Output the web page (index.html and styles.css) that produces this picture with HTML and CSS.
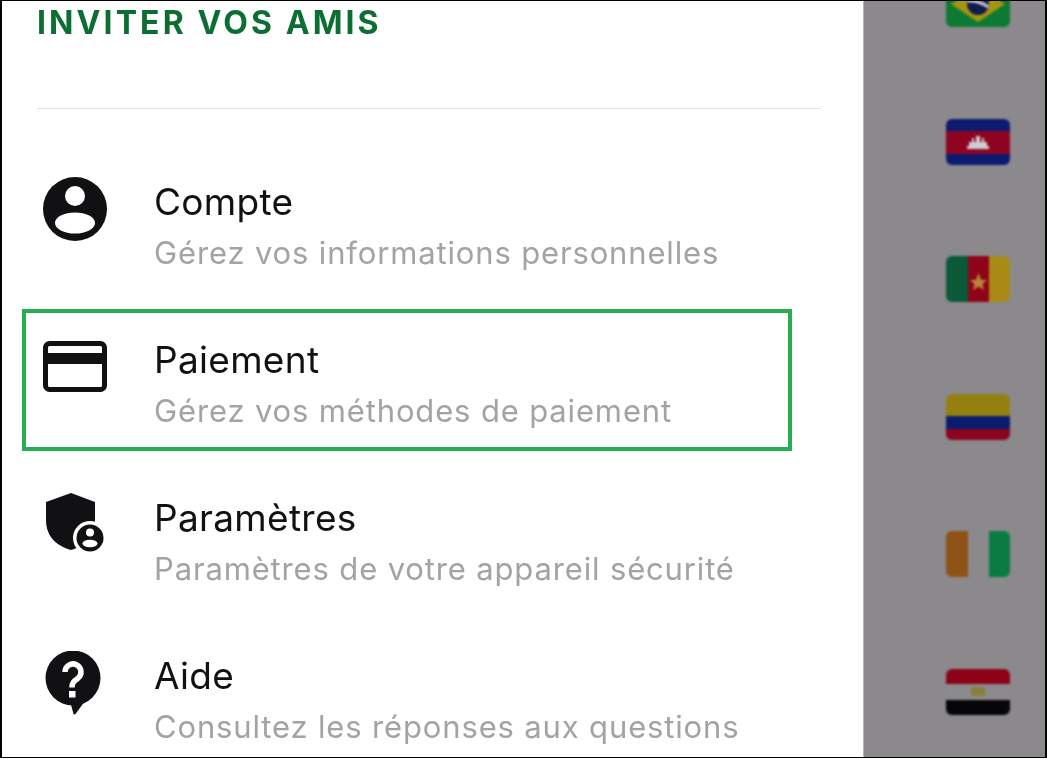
FILE: index.html
```html
<!DOCTYPE html>
<html lang="fr">
<head>
<meta charset="utf-8">
<title>Menu</title>
<link rel="stylesheet" href="styles.css">
</head>
<body>
<div class="frame">
  <main class="panel">
    <div class="invite">INVITER VOS AMIS</div>
    <hr class="divider">
    <div class="menu">
      <div class="row">
        <svg class="icon" viewBox="0 0 64 64"><circle cx="32" cy="32" r="32" fill="#111013"/><circle cx="32" cy="19" r="10" fill="#fff"/><ellipse cx="32" cy="46" rx="20" ry="10.5" fill="#fff"/></svg>
        <div class="text"><div class="name">Compte</div><div class="desc">Gérez vos informations personnelles</div></div>
      </div>
      <div class="row">
        <svg class="icon" viewBox="0 0 64 64"><rect x="2.5" y="8.5" width="59" height="46" rx="4" fill="none" stroke="#111013" stroke-width="5"/><rect x="2" y="18" width="60" height="11" fill="#111013"/></svg>
        <div class="text"><div class="name">Paiement</div><div class="desc">Gérez vos méthodes de paiement</div></div>
      </div>
      <div class="row">
        <svg class="icon" viewBox="0 0 64 64"><path d="M28 0 L52 9 V30 C52 44 42 53 28 57 C14 53 3 44 3 27 V9 Z" fill="#111013"/><circle cx="47" cy="45" r="17" fill="#fff"/><circle cx="47" cy="45" r="13.500" fill="#111013"/><circle cx="47" cy="39.5" r="4" fill="#fff"/><ellipse cx="47" cy="50.5" rx="7.5" ry="3.8" fill="#fff"/></svg>
        <div class="text"><div class="name">Paramètres</div><div class="desc">Paramètres de votre appareil sécurité</div></div>
      </div>
      <div class="row">
        <svg class="icon" viewBox="0 0 64 64"><circle cx="30" cy="27" r="27.5" fill="#111013"/><path d="M27 50 L42 50 L32.5 63 C31 64 30 63 30 61 Z" fill="#111013"/><path d="M22 21 a8 8 0 1 1 13 6.2 c-4 3 -6 4.500 -6 9.300" fill="none" stroke="#fff" stroke-width="5.5"/><rect x="26" y="40" width="6.5" height="6.5" fill="#fff"/></svg>
        <div class="text"><div class="name">Aide</div><div class="desc">Consultez les réponses aux questions</div></div>
      </div>
    </div>
    <div class="highlight"></div>
  </main>
  <aside class="flags">
    <svg class="flag" viewBox="0 0 64 46"><rect width="64" height="46" fill="#0c7a33"/><path d="M32 5 L59 23 L32 41 L5 23Z" fill="#a69410"/><circle cx="32" cy="23" r="11" fill="#101b4e"/><path d="M21.500 20 Q32 19 42.500 26" stroke="#c9c9d0" stroke-width="3" fill="none"/></svg>
    <svg class="flag" viewBox="0 0 64 46"><rect width="64" height="46" fill="#0c1a70"/><rect y="12" width="64" height="23" fill="#8f0322"/><path d="M21 30 V27 H23 V23 H26 V19 H28 V23 H30 V17 H34 V23 H36 V19 H38 V23 H41 V27 H43 V30Z" fill="#d0cdd0"/></svg>
    <svg class="flag" viewBox="0 0 64 46"><rect width="22" height="46" fill="#0a5a3a"/><rect x="22" width="21" height="46" fill="#8f0318"/><rect x="43" width="21" height="46" fill="#a98a16"/><path d="M32.500 17 L35 24 L41 24 L36.500 28 L38 34 L32.500 30.500 L27 34 L28.500 28 L24 24 L30 24Z" fill="#b9873a"/></svg>
    <svg class="flag" viewBox="0 0 64 46"><rect width="64" height="22" fill="#94800f"/><rect y="22" width="64" height="13" fill="#0a1c6e"/><rect y="35" width="64" height="11" fill="#8a0420"/></svg>
    <svg class="flag" viewBox="0 0 64 46"><rect width="22" height="46" fill="#8f5216"/><rect x="22" width="21" height="46" fill="#8b898c"/><rect x="43" width="21" height="46" fill="#0a7a42"/></svg>
    <svg class="flag" viewBox="0 0 64 46"><rect width="64" height="15" fill="#8c0318"/><rect y="15" width="64" height="16" fill="#8c8a8d"/><rect y="31" width="64" height="15" fill="#060508"/><rect x="25" y="18" width="14" height="9" rx="2" fill="#85803f"/></svg>
  </aside>
</div>
</body>
</html>
```
FILE: styles.css
```css
* { box-sizing: border-box; }
html, body { margin: 0; padding: 0; background: #fff; }
.frame {
  width: 1047px;
  height: 758px;
  border: solid #000;
  border-width: 1px 2px 1px 2px;
  display: flex;
  overflow: hidden;
  font-family: "Inter", sans-serif;
}
.panel {
  position: relative;
  width: 861px;
  flex: none;
  background: #fff;
  padding-left: 35px;
}
.invite {
  margin-top: 3px;
  height: 38px;
  line-height: 38px;
  font-size: 32px;
  font-weight: 700;
  letter-spacing: 3.100px;
  color: #0c6e32;
  filter: blur(0.4px);
}
.divider {
  width: 784px;
  height: 1px;
  margin: 66px 0 0;
  border: 0;
  background: #e2e2e2;
}
.menu { display: flex; flex-direction: column; margin-top: 67px; }
.row { display: flex; height: 158px; gap: 47px; padding-left: 6px; }
.icon { width: 64px; height: 64px; flex: none; margin-top: 1px; filter: blur(0.5px); }
.text { display: flex; flex-direction: column; filter: blur(0.4px); }
.name { font-size: 37px; line-height: 46px; margin-top: 3px; letter-spacing: 0.300px; color: #111013; }
.desc { font-size: 31px; line-height: 40px; margin-top: 8px; letter-spacing: 0.850px; color: #a3a2a5; }
.highlight {
  position: absolute;
  left: 20px;
  top: 308px;
  width: 770px;
  height: 142px;
  border: 4.500px solid #27ae50;
}
.flags {
  flex: 1;
  background: #8b898c;
  border-left: 1px solid #b5b4b6;
  display: flex;
  flex-direction: column;
  align-items: flex-start;
  gap: 91.500px;
  padding-left: 82px;
}
.flag {
  width: 64px;
  height: 46px;
  flex: none;
  border-radius: 6px;
  filter: blur(1px);
}
.flag:first-child { margin-top: -20px; }
```
